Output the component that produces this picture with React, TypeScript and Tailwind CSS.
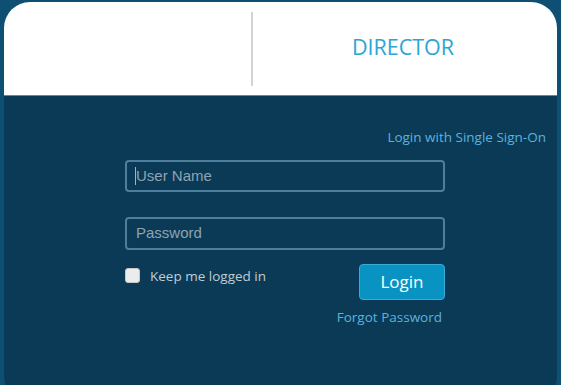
import React from "react";

export default function App() {
  const os = { fontFamily: '"Open Sans", "Liberation Sans", sans-serif' };
  const ar = { fontFamily: '"Liberation Sans", Arial, sans-serif' };
  return (
    <div className="h-[385px] w-[561px] overflow-hidden bg-[#0e4f74] pl-[4px] pr-[4px] pt-[2px]" style={os}>
      <div className="flex h-[400px] flex-col overflow-hidden rounded-[26px] bg-[#0a3a56]">
        <div className="flex h-[94px] items-center border-b border-[#5d8aa5] bg-white">
          <div className="w-[247px]" />
          <div className="h-[74px] w-[2px] bg-[#d3d3d3]" />
          <div className="flex flex-1 justify-center pr-[4px] pb-[2px]">
            <span className="text-[21.5px] text-[#2ba5d5]">DIRECTOR</span>
          </div>
        </div>
        <div className="flex flex-col">
          <div className="flex justify-end pr-[11px] pt-[32px]">
            <span className="text-[13.5px] leading-[18px] text-[#5cb2de]">Login with Single Sign-On</span>
          </div>
          <div className="ml-[121px] mt-[14px] flex w-[320px] flex-col">
            <div className="flex h-[32px] items-center rounded-[4px] border-2 border-[#4d7f9c] px-[8px]">
              <span className="h-[18px] w-[1px] bg-[#9fb3c0]" />
              <span className="text-[15px] text-[#8fa3b1]" style={ar}>User Name</span>
            </div>
            <div className="mt-[25px] flex h-[33px] items-center rounded-[4px] border-2 border-[#4d7f9c] px-[9px]">
              <span className="text-[15px] text-[#8fa3b1]" style={ar}>Password</span>
            </div>
            <div className="mt-[14px] flex justify-between">
              <div className="flex h-[24px] items-start pt-[4px]">
                <span className="h-[15px] w-[15px] rounded-[3px] border border-[#c8c8c8] bg-[#ececec]" />
                <span className="ml-[10px] text-[13.5px] leading-[16px] text-[#c2ccd3]">Keep me logged in</span>
              </div>
              <div className="flex flex-col items-end">
                <div className="flex h-[36px] w-[86px] items-center justify-center rounded-[4px] border border-[#37acd8] bg-[#0893c3]">
                  <span className="text-[17px] text-white">Login</span>
                </div>
                <span className="mr-[3px] mt-[8px] text-[13.5px] leading-[18px] text-[#5cb2de]">Forgot Password</span>
              </div>
            </div>
          </div>
        </div>
      </div>
    </div>
  );
}
